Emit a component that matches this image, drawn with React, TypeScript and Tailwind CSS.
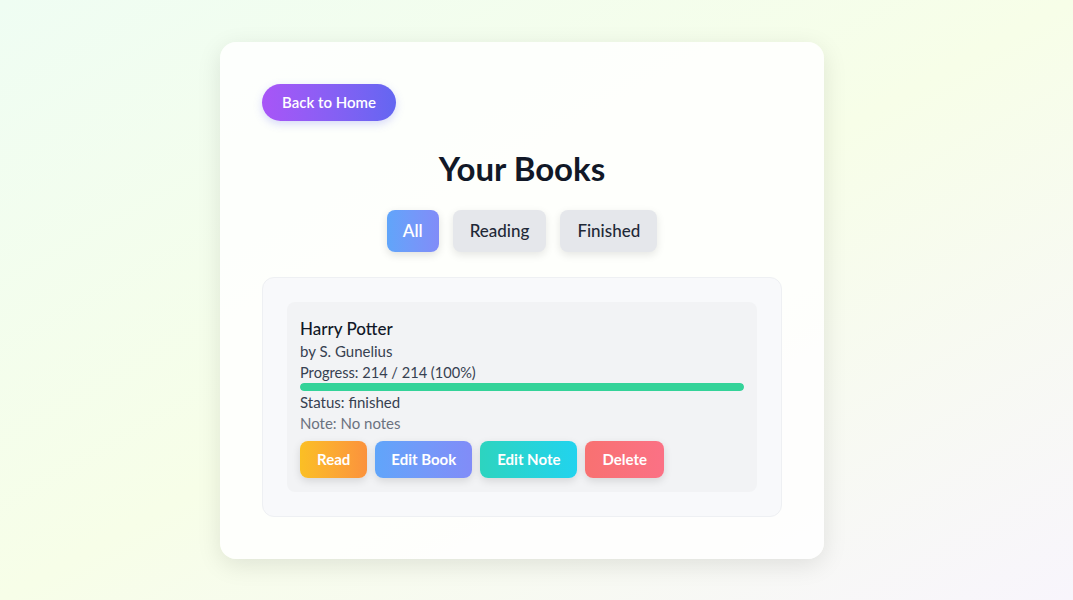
const books = [
  {
    id: 1,
    title: "Harry Potter",
    author: "S. Gunelius",
    currentPage: 214,
    totalPages: 214,
    status: "finished",
    note: "",
  },
];

export default function App() {
  const filters = ["All", "Reading", "Finished"];
  const active = "All";

  return (
    <div
      className="min-h-screen w-full bg-gradient-to-br from-[#effdf3] via-[#f7fee8] to-[#f8f5fc] pt-[42px] pb-10"
      style={{ fontFamily: "Lato, 'Noto Sans', sans-serif" }}
    >
      <div className="ml-[220px] w-[604px] rounded-2xl bg-white/85 shadow-[0_6px_24px_rgba(0,0,0,0.10)] px-[42px] pt-[42px] pb-[42px]">
        <button className="h-[37px] px-5 rounded-full bg-gradient-to-r from-[#a855f7] to-[#6366f1] text-white text-[15px] font-semibold shadow-[0_3px_8px_rgba(99,102,241,0.25)]">
          Back to Home
        </button>

        <h1 className="mt-[27px] text-center text-[33px] leading-[40px] font-bold text-[#111827]">
          Your Books
        </h1>

        <div className="mt-[22px] flex justify-center gap-[14px]">
          {filters.map((f) =>
            f === active ? (
              <button
                key={f}
                className="h-[42px] px-4 rounded-lg bg-gradient-to-r from-[#60a5fa] to-[#818cf8] text-white text-[17px] font-semibold shadow-[0_3px_8px_rgba(0,0,0,0.12)]"
              >
                {f}
              </button>
            ) : (
              <button
                key={f}
                className="h-[42px] px-[17px] rounded-lg bg-[#e5e7eb] text-[#1f2937] text-[17px] font-medium shadow-[0_3px_8px_rgba(0,0,0,0.10)]"
              >
                {f}
              </button>
            )
          )}
        </div>

        <div className="mt-[25px] rounded-xl bg-[#f8f9fb] border border-[#eef0f3] p-6">
          {books.map((book) => {
            const pct = Math.round((book.currentPage / book.totalPages) * 100);
            return (
              <div key={book.id} className="rounded-lg bg-[#f2f3f5] px-[13px] pt-[16px] pb-[14px]">
                <div className="text-[17px] leading-[22px] font-medium text-[#111827]">{book.title}</div>
                <div className="text-[15px] leading-[21px] text-[#374151] mt-[1px]">by {book.author}</div>
                <div className="text-[14.6px] leading-[21px] text-[#374151]">
                  Progress: {book.currentPage} / {book.totalPages} ({pct}%)
                </div>
                <div className="h-2 w-full rounded-full bg-[#e5e7eb] overflow-hidden">
                  <div className="h-full rounded-full bg-[#34d399]" style={{ width: `${pct}%` }} />
                </div>
                <div className="text-[15px] leading-[21px] text-[#374151] mt-[1px]">Status: {book.status}</div>
                <div className="text-[15px] leading-[21px] text-[#6b7280]">Note: {book.note || "No notes"}</div>
                <div className="mt-[7px] flex gap-[8px]">
                  <button className="h-[37px] px-[17px] rounded-lg bg-gradient-to-r from-[#fbbf24] to-[#fb923c] text-white text-[15px] font-bold shadow-[0_3px_8px_rgba(0,0,0,0.12)]">
                    Read
                  </button>
                  <button className="h-[37px] px-4 rounded-lg bg-gradient-to-r from-[#60a5fa] to-[#818cf8] text-white text-[15px] font-bold shadow-[0_3px_8px_rgba(0,0,0,0.12)]">
                    Edit Book
                  </button>
                  <button className="h-[37px] px-[17px] rounded-lg bg-gradient-to-r from-[#2dd4bf] to-[#22d3ee] text-white text-[15px] font-bold shadow-[0_3px_8px_rgba(0,0,0,0.12)]">
                    Edit Note
                  </button>
                  <button className="h-[37px] px-[17px] rounded-lg bg-gradient-to-r from-[#f87171] to-[#fb7185] text-white text-[15px] font-bold shadow-[0_3px_8px_rgba(0,0,0,0.12)]">
                    Delete
                  </button>
                </div>
              </div>
            );
          })}
        </div>
      </div>
    </div>
  );
}
